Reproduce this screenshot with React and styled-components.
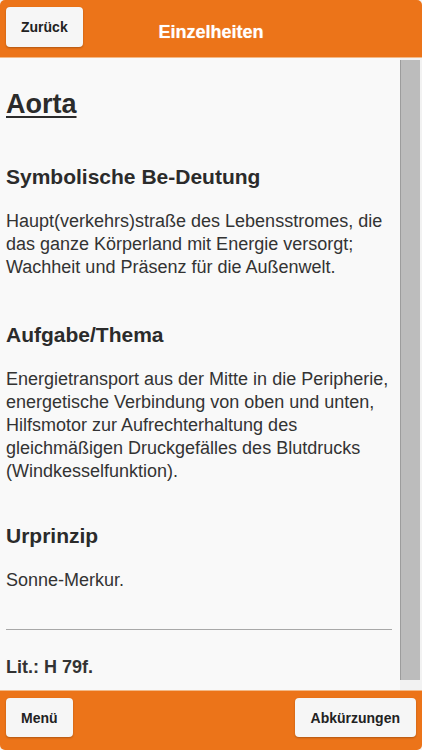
import React from 'react';
import styled, { createGlobalStyle } from 'styled-components';

const GlobalStyle = createGlobalStyle`
  html, body {
    margin: 0;
    padding: 0;
    background: #f4f4f4;
  }
  * {
    box-sizing: border-box;
  }
`;

const Page = styled.div`
  width: 422px;
  height: 750px;
  display: flex;
  flex-direction: column;
  font-family: 'Liberation Sans', Arial, sans-serif;
  color: #333;
  overflow: hidden;
`;

const Bar = styled.div`
  height: ${({ $height }) => $height}px;
  flex-shrink: 0;
  background: #ec7419;
  display: flex;
  align-items: flex-start;
  padding: 7px 6px;
  position: relative;
  border-radius: ${({ $top }) => ($top ? '5px 5px 0 0' : '0 0 5px 5px')};
  border-${({ $top }) => ($top ? 'bottom' : 'top')}: 1px solid #f3b987;
`;

const Button = styled.button`
  height: ${({ $height }) => $height || 40}px;
  padding: 0 ${({ $pad }) => $pad || 14}px;
  border: none;
  border-radius: 4px;
  background: #f6f6f6;
  box-shadow: 0 1px 2px rgba(0, 0, 0, 0.25);
  font-family: 'Liberation Sans', Arial, sans-serif;
  font-weight: bold;
  font-size: 14px;
  color: #222;
  margin-left: ${({ $push }) => ($push ? 'auto' : '0')};
`;

const Title = styled.h1`
  position: absolute;
  left: 0;
  right: 0;
  top: 21px;
  margin: 0;
  text-align: center;
  font-size: 18px;
  line-height: 22px;
  font-weight: bold;
  color: #fff;
  text-shadow: 0 0 1px rgba(255, 255, 255, 0.6);
  pointer-events: none;
`;

const Body = styled.div`
  flex: 1;
  display: flex;
  background: #f9f9f9;
  min-height: 0;
`;

const Content = styled.div`
  flex: 1;
  padding: 31px 8px 0 6px;
`;

const Track = styled.div`
  width: 22px;
  flex-shrink: 0;
  display: flex;
  padding: 2px 2px 10px 0;
  background: #f2f2f2;
`;

const Thumb = styled.div`
  flex: 1;
  background: #bcbcbc;
  border-left: 1px solid #9c9c9c;
`;

const Name = styled.h1`
  margin: 0 0 46px;
  font-size: 27px;
  line-height: 30px;
  font-weight: bold;
  text-decoration: underline;
  text-underline-offset: 3px;
  color: #2b2b2b;
`;

const Heading = styled.h2`
  margin: 0 0 21px;
  font-size: 21px;
  line-height: 24px;
  font-weight: bold;
  color: #2b2b2b;
`;

const Text = styled.p`
  margin: 0 0 ${({ $after }) => $after}px;
  font-size: 18px;
  line-height: 23px;
  font-weight: ${({ $bold }) => ($bold ? 'bold' : 'normal')};
  color: #333;
`;

const Rule = styled.hr`
  margin: 0 0 26px;
  border: none;
  border-top: 1px solid #a8a8a8;
`;

const sections = [
  {
    title: 'Symbolische Be-Deutung',
    text: 'Haupt(verkehrs)straße des Lebensstromes, die das ganze Körperland mit Energie versorgt; Wachheit und Präsenz für die Außenwelt.',
    after: 44,
  },
  {
    title: 'Aufgabe/Thema',
    text: 'Energietransport aus der Mitte in die Peripherie, energetische Verbindung von oben und unten, Hilfsmotor zur Aufrechterhaltung des gleichmäßigen Druckgefälles des Blutdrucks (Windkesselfunktion).',
    after: 41,
  },
  {
    title: 'Urprinzip',
    text: 'Sonne-Merkur.',
    after: 37,
  },
];

const App = () => (
  <Page>
    <GlobalStyle />
    <Bar $top $height={58}>
      <Button $pad={15}>Zurück</Button>
      <Title>Einzelheiten</Title>
    </Bar>
    <Body>
      <Content>
        <Name>Aorta</Name>
        {sections.map((s) => (
          <React.Fragment key={s.title}>
            <Heading>{s.title}</Heading>
            <Text $after={s.after}>{s.text}</Text>
          </React.Fragment>
        ))}
        <Rule />
        <Text $bold $after={0}>Lit.: H 79f.</Text>
      </Content>
      <Track>
        <Thumb />
      </Track>
    </Body>
    <Bar $height={60}>
      <Button $height={39} $pad={15}>Menü</Button>
      <Button $height={39} $pad={16} $push>Abkürzungen</Button>
    </Bar>
  </Page>
);

export default App;
